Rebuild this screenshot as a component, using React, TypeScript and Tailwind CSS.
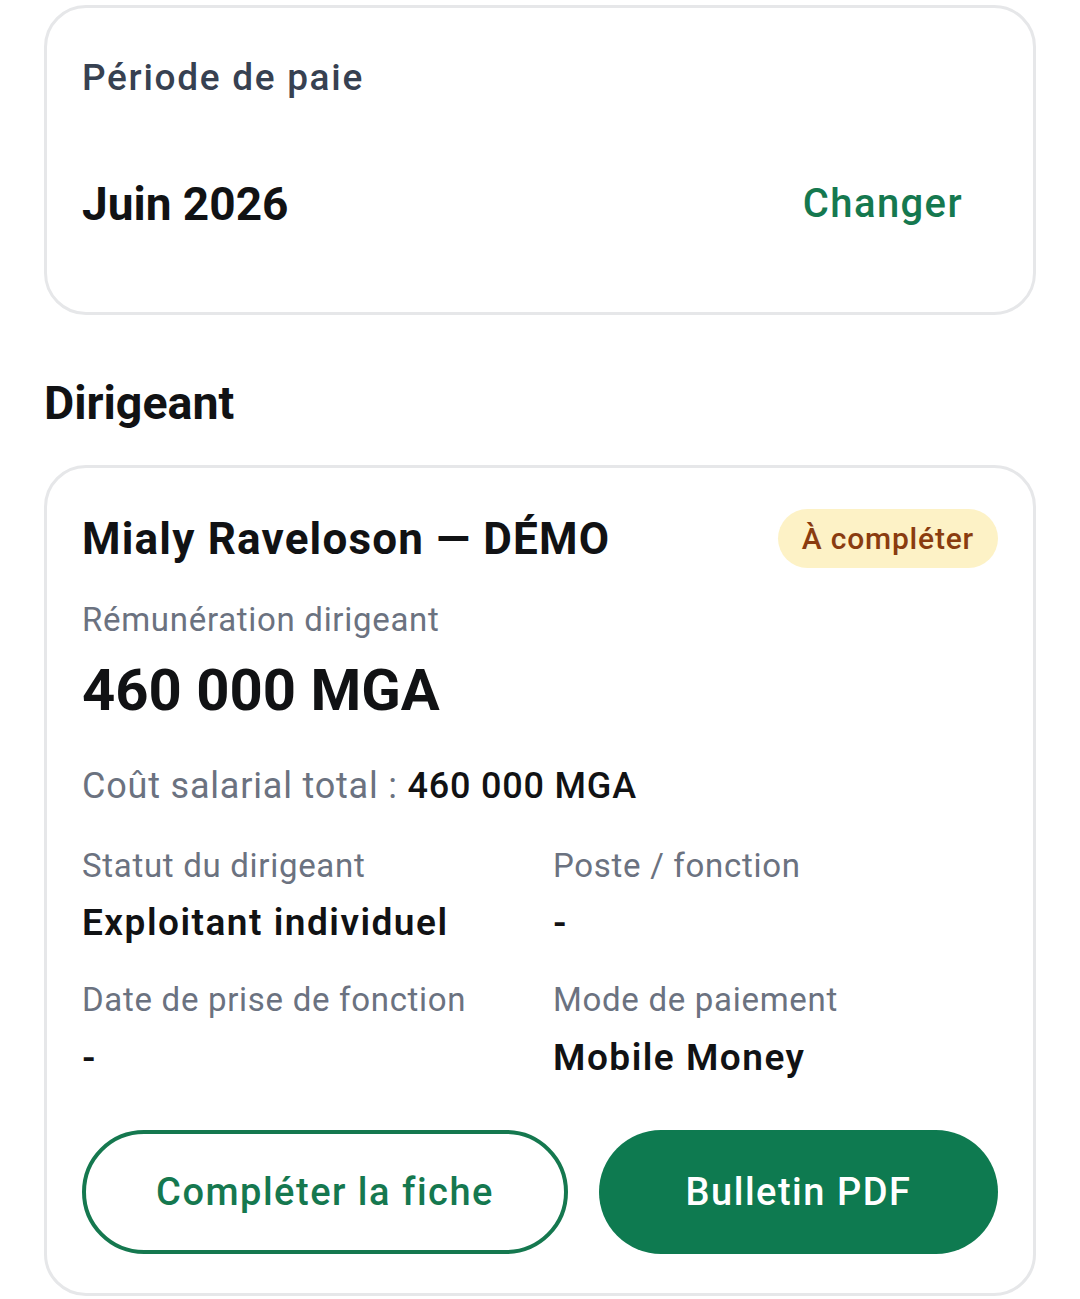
import React from "react";

export default function App() {
  return (
    <div className="min-h-[1299px] bg-white px-[44px] pt-[5px] pb-[3px]" style={{ fontFamily: "Roboto, 'Noto Sans', sans-serif" }}>
      <div className="rounded-[42px] border-[3px] border-[#e6e7e9] bg-white pl-[35px] pr-[70px] pt-[48px] pb-[80px]">
        <div className="text-[37px] leading-[44px] font-medium tracking-[1.7px] text-[#374151]">Période de paie</div>
        <div className="mt-[76px] flex items-center justify-between">
          <div className="text-[46px] leading-[56px] font-bold text-[#111214]">Juin 2026</div>
          <div className="text-[40px] leading-[56px] font-medium tracking-[1.4px] text-[#15784f]">Changer</div>
        </div>
      </div>

      <div className="mt-[63px] text-[46.5px] leading-[50px] font-bold text-[#111214]">Dirigeant</div>

      <div className="mt-[37px] rounded-[42px] border-[3px] border-[#e6e7e9] bg-white px-[35px] pt-[41px] pb-[39px]">
        <div className="flex items-center justify-between">
          <div className="text-[44px] leading-[50px] font-bold tracking-[1.2px] text-[#111214]">Mialy Raveloson — DÉMO</div>
          <div className="flex h-[59px] items-center rounded-full bg-[#fdf2c6] px-[24px] text-[30px] font-medium tracking-[0.8px] text-[#8a3c0f]">À compléter</div>
        </div>
        <div className="mt-[32px] text-[33px] leading-[40px] tracking-[0.7px] text-[#6b7280]">Rémunération dirigeant</div>
        <div className="mt-[17px] text-[58px] leading-[66px] font-bold text-[#111214]">460 000 MGA</div>
        <div className="mt-[42px] text-[36px] leading-[42px] tracking-[0.8px] text-[#6b7280]">
          Coût salarial total : <span className="font-medium text-[#111214]">460 000 MGA</span>
        </div>
        <div className="mt-[39px] grid grid-cols-2 gap-x-[26px] gap-y-[34px]">
          <div>
            <div className="text-[33px] leading-[40px] tracking-[0.7px] text-[#6b7280]">Statut du dirigeant</div>
            <div className="mt-[14px] text-[37px] leading-[46px] font-semibold tracking-[1.5px] text-[#111214]">Exploitant individuel</div>
          </div>
          <div>
            <div className="text-[33px] leading-[40px] tracking-[0.7px] text-[#6b7280]">Poste / fonction</div>
            <div className="mt-[14px] text-[37px] leading-[46px] font-semibold tracking-[1.5px] text-[#111214]">-</div>
          </div>
          <div>
            <div className="text-[33px] leading-[40px] tracking-[0.7px] text-[#6b7280]">Date de prise de fonction</div>
            <div className="mt-[15px] text-[37px] leading-[46px] font-semibold tracking-[1.5px] text-[#111214]">-</div>
          </div>
          <div>
            <div className="text-[33px] leading-[40px] tracking-[0.7px] text-[#6b7280]">Mode de paiement</div>
            <div className="mt-[15px] text-[37px] leading-[46px] font-semibold tracking-[1.5px] text-[#111214]">Mobile Money</div>
          </div>
        </div>
        <div className="mt-[49px] flex gap-[31px]">
          <div className="flex h-[124px] w-[486px] items-center justify-center rounded-full border-[4px] border-[#15784f] text-[38px] font-medium tracking-[1.5px] text-[#15784f]">Compléter la fiche</div>
          <div className="flex h-[124px] flex-1 items-center justify-center rounded-full bg-[#0e7a50] text-[38px] font-medium tracking-[1.5px] text-white">Bulletin PDF</div>
        </div>
      </div>
    </div>
  );
}
